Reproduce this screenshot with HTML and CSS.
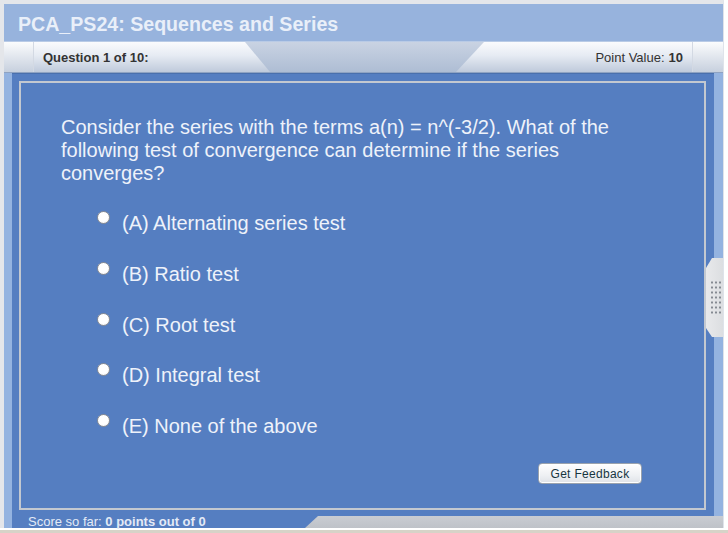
FILE: index.html
```html
<!DOCTYPE html>
<html lang="en">
<head>
<meta charset="utf-8">
<title>PCA_PS24: Sequences and Series</title>
<link rel="stylesheet" href="styles.css">
</head>
<body>
<div class="page">
  <div class="app">
    <header class="titlebar">
      <h1 class="title">PCA_PS24: Sequences and Series</h1>
    </header>
    <nav class="tabs">
      <div class="stub"></div>
      <div class="tab tab-q">Question 1 of 10:</div>
      <div class="tab-gap"></div>
      <div class="tab tab-p">Point Value: <b>10</b></div>
      <div class="stub stub-r"></div>
    </nav>
    <main class="stage">
      <div class="frame">
        <section class="panel">
          <p class="question">Consider the series with the terms a(n) = n^(-3/2). What of the following test of convergence can determine if the series converges?</p>
          <ul class="options">
            <li class="option"><span class="radio"></span><span class="opt-text">(A) Alternating series test</span></li>
            <li class="option"><span class="radio"></span><span class="opt-text">(B) Ratio test</span></li>
            <li class="option"><span class="radio"></span><span class="opt-text">(C) Root test</span></li>
            <li class="option"><span class="radio"></span><span class="opt-text">(D) Integral test</span></li>
            <li class="option"><span class="radio"></span><span class="opt-text">(E) None of the above</span></li>
          </ul>
          <div class="actions"><button class="btn" type="button">Get Feedback</button></div>
        </section>
        <footer class="footer">
          <span class="score">Score so far: <b>0 points out of 0</b></span>
          <div class="foot-tab"></div>
        </footer>
      </div>
      <div class="handle"><div class="grip"></div></div>
    </main>
  </div>
  <div class="baseline"></div>
</div>
</body>
</html>
```
FILE: styles.css
```css
* { box-sizing: border-box; }
html, body { margin: 0; padding: 0; }
body {
  background: #ffffff;
  font-family: "Liberation Sans", Arial, sans-serif;
  width: 728px;
  height: 533px;
  overflow: hidden;
}
.page {
  width: 728px;
  height: 533px;
  display: flex;
  flex-direction: column;
}
.app {
  width: 724px;
  height: 528px;
  border-top: 4px solid #e4e6ea;
  border-left: 4px solid #e4e6ea;
  border-right: 1px solid #dfe3ea;
  display: flex;
  flex-direction: column;
}
.titlebar {
  height: 38px;
  background: #97b3dd;
  display: flex;
  align-items: center;
  padding: 4px 0 0 14px;
  border-bottom: 1px solid #b9cbe6;
}
.title {
  margin: 0;
  font-size: 19.6px;
  font-weight: bold;
  color: #e9eff9;
}
.tabs {
  height: 31px;
  display: flex;
  background: linear-gradient(#c9d3e3, #aebdd4);
  border-bottom: 1px solid #8fa3c2;
}
.stub {
  width: 30px;
  background: linear-gradient(#fbfcfd, #c7d0de);
  border-right: 1px solid #d3d9e3;
}
.stub-r {
  width: 31px;
  border-right: 0;
  border-left: 1px solid #d3d9e3;
}
.tab {
  width: 236px;
  background: linear-gradient(#fafbfd 0%, #e6ebf3 45%, #bfcadb 100%);
  display: flex;
  align-items: center;
  padding-top: 1px;
  font-size: 13px;
  color: #333333;
}
.tab-q {
  padding-left: 9px;
  font-weight: bold;
  clip-path: polygon(0 0, 211px 0, 236px 100%, 0 100%);
}
.tab-gap { flex: 1; }
.tab-p {
  justify-content: flex-end;
  padding-right: 9px;
  clip-path: polygon(28px 0, 100% 0, 100% 100%, 0 100%);
}
.tab-p b { margin-left: 4px; }
.stage {
  position: relative;
  flex: 1;
  background: #94b3e0;
  padding-left: 8px;
  display: flex;
}
.frame {
  flex: 1;
  margin-right: 9px;
  background: #557ec1;
  border-top: 1px solid #4a70ad;
  padding: 7px 0 0 7px;
  display: flex;
  flex-direction: column;
}
.panel {
  height: 429px;
  flex: none;
  margin-right: 8px;
  border: 2px solid #c3c8d0;
  display: flex;
  flex-direction: column;
  color: #eef2fa;
}
.question {
  margin: 0;
  padding: 33px 50px 0 40px;
  font-size: 20px;
  line-height: 23px;
}
.options {
  list-style: none;
  margin: 0;
  padding: 27px 0 0 76px;
  display: flex;
  flex-direction: column;
  gap: 28.75px;
}
.option {
  height: 22px;
  display: flex;
  align-items: flex-start;
  font-size: 20px;
  line-height: 22px;
}
.radio {
  width: 13px;
  height: 13px;
  margin-top: -1px;
  border-radius: 50%;
  background: radial-gradient(circle at 45% 40%, #ffffff 55%, #e4e4e4 100%);
  border: 1px solid #8d8f94;
  margin-right: 12px;
  flex: none;
}
.actions {
  margin-top: auto;
  display: flex;
  justify-content: flex-end;
  padding: 0 62px 24px 0;
}
.btn {
  width: 104px;
  height: 21px;
  padding: 0;
  border: 1px solid #9aa2ad;
  border-radius: 4px;
  background: linear-gradient(#ffffff, #eef0f3 60%, #dfe2e7);
  box-shadow: inset 0 0 0 1px #ffffff;
  font-family: "Liberation Sans", Arial, sans-serif;
  font-size: 12px;
  letter-spacing: 0.3px;
  color: #17353f;
}
.footer {
  flex: 1;
  display: flex;
  align-items: flex-end;
  margin-right: -9px;
}
.score {
  flex: 1;
  padding-left: 9px;
  font-size: 13px;
  line-height: 12px;
  color: #e3eaf6;
}
.foot-tab {
  width: 418px;
  height: 12px;
  background: linear-gradient(#c9ccd2, #bec2c8);
  clip-path: polygon(13px 0, 100% 0, 100% 100%, 0 100%);
}
.handle {
  position: absolute;
  top: 185px;
  right: 0;
  width: 17px;
  height: 79px;
  background: linear-gradient(90deg, #e8e9eb, #dcdee1);
  clip-path: polygon(6px 0, 100% 0, 100% 100%, 6px 100%, 0 70px, 0 10px);
  display: flex;
  justify-content: center;
  align-items: center;
  padding-left: 2px;
}
.grip {
  width: 12px;
  height: 35px;
  background-image: radial-gradient(circle, #858a92 0.9px, transparent 1.3px);
  background-size: 4px 5px;
}
.baseline {
  height: 5px;
  background: linear-gradient(#ffffff 0, #ffffff 2px, #d7d3c8 2px);
}
```
